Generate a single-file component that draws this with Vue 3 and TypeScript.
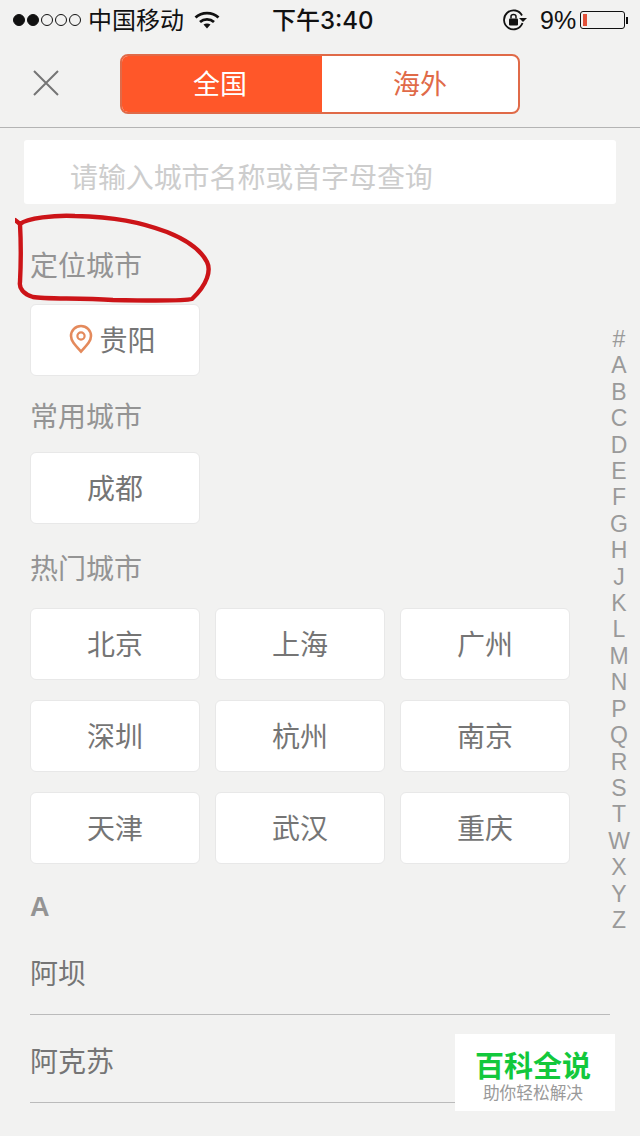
<script setup lang="ts">
const popular: string[] = ['北京', '上海', '广州', '深圳', '杭州', '南京', '天津', '武汉', '重庆']
const letters: string[] = '#ABCDEFGHJKLMNPQRSTWXYZ'.split('')
const cityRows: string[] = ['阿坝', '阿克苏']
</script>

<template>
  <div class="page">
    <div class="status">
      <div class="signal">
        <i class="on"></i><i class="on"></i><i></i><i></i><i></i>
      </div>
      <span class="carrier">中国移动</span>
      <svg class="wifi" width="26" height="20" viewBox="0 0 26 20">
        <path d="M1.500 7.500C7.800 1.600 18.200 1.600 24.500 7.500" fill="none" stroke="#111" stroke-width="2.800" />
        <path d="M6 12C10 8.400 16 8.400 20 12" fill="none" stroke="#111" stroke-width="2.800" />
        <path d="M9.500 14.500C11.500 13 14.500 13 16.500 14.500L13 18.500Z" fill="#111" />
      </svg>
      <span class="time">下午3:40</span>
      <svg class="lock" width="26" height="24" viewBox="0 0 26 24">
        <path d="M20 7.500A9.500 9.500 0 1 0 20.500 15" fill="none" stroke="#111" stroke-width="1.800" />
        <path d="M17 10H25L21 14Z" fill="#111" />
        <rect x="7" y="10.500" width="9" height="7" rx="1" fill="#111" />
        <path d="M9 10.500V8.500C9 5.800 14 5.800 14 8.500V10.500" fill="none" stroke="#111" stroke-width="1.500" />
      </svg>
      <span class="pct">9%</span>
      <div class="battery"><div class="charge"></div></div>
      <div class="nub"></div>
    </div>

    <div class="nav">
      <svg class="close" width="28" height="28" viewBox="0 0 28 28">
        <path d="M2 2L26 26M26 2L2 26" stroke="#757575" stroke-width="2" fill="none" />
      </svg>
      <div class="tabs">
        <div class="tab active">全国</div>
        <div class="tab">海外</div>
      </div>
    </div>

    <div class="search">请输入城市名称或首字母查询</div>

    <div class="content">
      <div class="label first">定位城市</div>
      <div class="grid">
        <div class="cell loc">
          <svg class="pin" width="24" height="30" viewBox="0 0 24 30">
            <path d="M12 27.500C6 21 2 17 2 12A10 10 0 0 1 22 12C22 17 18 21 12 27.500Z" fill="none" stroke="#e48a5c" stroke-width="2.600" />
            <circle cx="12" cy="12" r="3.600" fill="none" stroke="#e48a5c" stroke-width="2.200" />
          </svg>
          贵阳
        </div>
      </div>
      <div class="label second">常用城市</div>
      <div class="grid">
        <div class="cell">成都</div>
      </div>
      <div class="label hot">热门城市</div>
      <div class="grid">
        <div v-for="c in popular" :key="c" class="cell">{{ c }}</div>
      </div>
      <div class="letter">A</div>
      <div v-for="c in cityRows" :key="c" class="row">{{ c }}</div>
    </div>

    <div class="index">
      <span v-for="l in letters" :key="l">{{ l }}</span>
    </div>

    <svg class="scribble" width="200" height="95" viewBox="0 0 200 95">
      <path d="M0 8L5 12C12 6 40 3 60 4C100 5 125 10 152 20C172 28 186 38 192 50C196 58 193 72 177 87C170 89 150 89 98 88C60 86 30 87 18 85C8 82 4 76 5 70C6 50 6 30 5 12" fill="none" stroke="#cc1418" stroke-width="4.400" stroke-linecap="round" stroke-linejoin="round" />
    </svg>

    <div class="watermark">
      <div class="wm-title">百科全说</div>
      <div class="wm-sub">助你轻松解决</div>
    </div>
  </div>
</template>

<style scoped>
.page {
  position: relative;
  width: 640px;
  height: 1136px;
  overflow: hidden;
  background: #f2f2f1;
  font-family: "Noto Sans CJK SC", "Liberation Sans", sans-serif;
}

.status {
  display: flex;
  align-items: center;
  height: 40px;
  padding-left: 13px;
  color: #111;
  font-size: 24px;
  font-family: "Inter", "Noto Sans CJK SC", sans-serif;
}

.signal {
  display: flex;
  gap: 2px;
}

.signal i {
  width: 12px;
  height: 12px;
  box-sizing: border-box;
  border: 1px solid #111;
  border-radius: 50%;
}

.signal i.on {
  background: #111;
}

.carrier {
  margin-left: 7px;
  width: 97px;
  padding-bottom: 3px;
  white-space: nowrap;
}

.wifi {
  margin-left: 9px;
}

.time {
  margin-left: 52px;
  width: 103px;
  padding-bottom: 3px;
  font-weight: 500;
  white-space: nowrap;
}

.lock {
  margin-left: 127px;
}

.pct {
  margin-left: 12px;
  width: 34px;
  font-family: "Liberation Sans", sans-serif;
  font-size: 25px;
}

.battery {
  margin-left: 6px;
  width: 45px;
  height: 18px;
  box-sizing: border-box;
  padding: 2px;
  border: 1px solid #111;
  border-radius: 3px;
}

.charge {
  width: 4px;
  height: 100%;
  background: #e2513a;
}

.nub {
  width: 2px;
  height: 7px;
  margin-left: 1px;
  background: #111;
}

.nav {
  position: relative;
  display: flex;
  justify-content: center;
  height: 88px;
  padding-top: 14px;
  box-sizing: border-box;
  border-bottom: 1px solid #b4b4b4;
}

.close {
  position: absolute;
  left: 32px;
  top: 29px;
}

.tabs {
  display: flex;
  width: 400px;
  height: 60px;
  box-sizing: border-box;
  border: 2px solid #e06a48;
  border-radius: 8px;
  overflow: hidden;
  background: #fff;
}

.tab {
  flex: 1;
  display: flex;
  align-items: center;
  justify-content: center;
  padding-bottom: 4px;
  box-sizing: border-box;
  font-size: 27px;
  color: #e06a48;
}

.tab.active {
  flex: none;
  width: 200px;
  padding-right: 4px;
  background: #ff5729;
  color: #fff;
}

.search {
  height: 64px;
  margin: 12px 24px 0;
  padding-left: 46px;
  background: #fff;
  border-radius: 3px;
  color: #cdcdcd;
  font-size: 28px;
  letter-spacing: -0.1px;
  line-height: 72px;
  overflow: hidden;
}

.content {
  padding: 0 30px;
}

.label {
  font-size: 28px;
  line-height: 40px;
  color: #949494;
}

.label.first {
  margin: 40px 0 20px;
}

.label.second {
  margin: 19px 0 17px;
}

.label.hot {
  margin: 23px 0 21px;
}

.grid {
  display: grid;
  grid-template-columns: repeat(3, 170px);
  gap: 20px 15px;
}

.cell {
  display: flex;
  align-items: center;
  justify-content: center;
  gap: 6px;
  height: 72px;
  padding-bottom: 3px;
  box-sizing: border-box;
  background: #fff;
  border: 1px solid #e8e8e8;
  border-radius: 6px;
  color: #757575;
  font-size: 28px;
}

.cell.loc {
  padding-right: 5px;
}

.letter {
  margin-top: 23px;
  font-family: "Liberation Sans", sans-serif;
  font-size: 27px;
  font-weight: 700;
  line-height: 40px;
  color: #949494;
}

.row {
  width: 580px;
  height: 88px;
  padding-top: 4px;
  box-sizing: border-box;
  border-bottom: 1px solid #bbb;
  font-size: 28px;
  line-height: 83px;
  color: #757575;
}

.index {
  position: absolute;
  right: 10px;
  top: 326px;
  display: flex;
  flex-direction: column;
  align-items: center;
  width: 22px;
  font-family: "Liberation Sans", sans-serif;
  font-size: 23px;
  line-height: 26.400px;
  color: #9a9a9a;
}

.scribble {
  position: absolute;
  left: 15px;
  top: 212px;
}

.watermark {
  position: absolute;
  left: 455px;
  top: 1034px;
  width: 160px;
  height: 77px;
  padding-right: 4px;
  box-sizing: border-box;
  background: #fff;
  text-align: center;
}

.wm-title {
  margin-top: 14px;
  font-size: 29px;
  font-weight: 700;
  line-height: 32px;
  color: #12c83c;
}

.wm-sub {
  font-size: 16.700px;
  line-height: 24px;
  color: #9a9a9a;
}
</style>
